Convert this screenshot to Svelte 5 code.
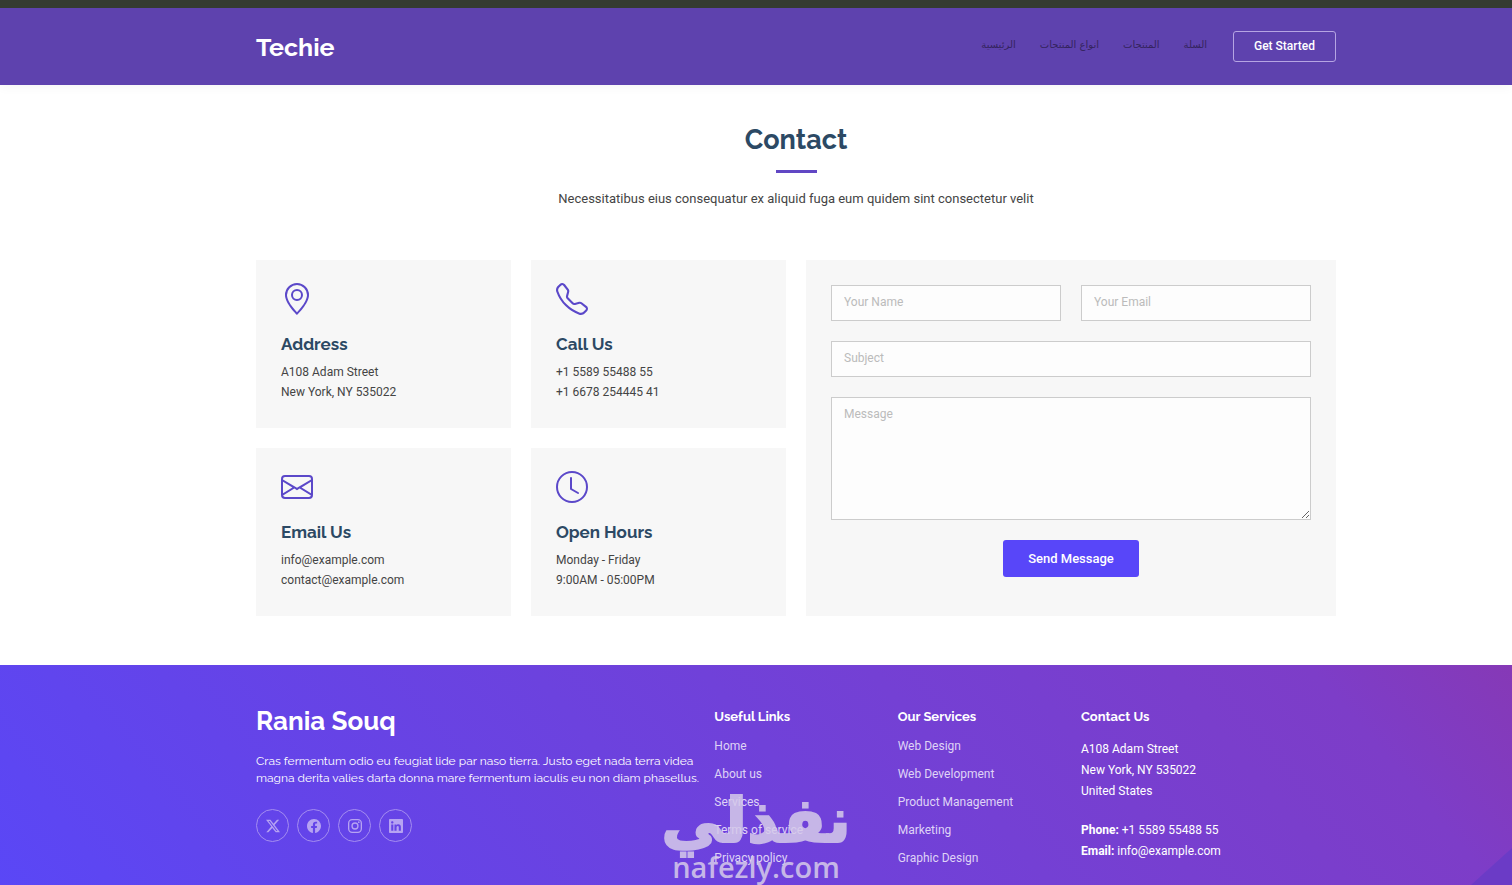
<script>
	const nav = ['الرئيسية', 'انواع المنتجات', 'المنتجات', 'السلة'];

	const cards = [
		{ icon: 'geo', title: 'Address', lines: ['A108 Adam Street', 'New York, NY 535022'] },
		{ icon: 'phone', title: 'Call Us', lines: ['+1 5589 55488 55', '+1 6678 254445 41'] },
		{ icon: 'envelope', title: 'Email Us', lines: ['info@example.com', 'contact@example.com'] },
		{ icon: 'clock', title: 'Open Hours', lines: ['Monday - Friday', '9:00AM - 05:00PM'] }
	];

	const columns = [
		{
			title: 'Useful Links',
			links: ['Home', 'About us', 'Services', 'Terms of service', 'Privacy policy']
		},
		{
			title: 'Our Services',
			links: ['Web Design', 'Web Development', 'Product Management', 'Marketing', 'Graphic Design']
		}
	];

	const socials = [
		{ icon: 'x', label: 'X' },
		{ icon: 'facebook', label: 'Facebook' },
		{ icon: 'instagram', label: 'Instagram' },
		{ icon: 'linkedin', label: 'LinkedIn' }
	];

	const icons = {
		geo: 'M12.166 8.94c-.524 1.062-1.234 2.12-1.96 3.07A32 32 0 0 1 8 14.58a32 32 0 0 1-2.206-2.57c-.726-.95-1.436-2.008-1.96-3.07C3.304 7.867 3 6.862 3 6a5 5 0 0 1 10 0c0 .862-.305 1.867-.834 2.94M8 16s6-5.686 6-10A6 6 0 0 0 2 6c0 4.314 6 10 6 10M8 8a2 2 0 1 1 0-4 2 2 0 0 1 0 4m0 1a3 3 0 1 0 0-6 3 3 0 0 0 0 6',
		phone: 'M3.654 1.328a.678.678 0 0 0-1.015-.063L1.605 2.3c-.483.484-.661 1.169-.45 1.77a17.6 17.6 0 0 0 4.168 6.608 17.6 17.6 0 0 0 6.608 4.168c.601.211 1.286.033 1.77-.45l1.034-1.034a.678.678 0 0 0-.063-1.015l-2.307-1.794a.68.68 0 0 0-.58-.122l-2.19.547a1.75 1.75 0 0 1-1.657-.459L5.482 8.062a1.75 1.75 0 0 1-.46-1.657l.548-2.19a.68.68 0 0 0-.122-.58zM1.884.511a1.745 1.745 0 0 1 2.612.163L6.29 2.98c.329.423.445.974.315 1.494l-.547 2.19a.68.68 0 0 0 .178.643l2.457 2.457a.68.68 0 0 0 .644.178l2.189-.547a1.75 1.75 0 0 1 1.494.315l2.306 1.794c.829.645.905 1.87.163 2.611l-1.034 1.034c-.74.74-1.846 1.065-2.877.702a18.6 18.6 0 0 1-7.01-4.42 18.6 18.6 0 0 1-4.42-7.009c-.362-1.03-.037-2.137.703-2.877z',
		envelope: 'M0 4a2 2 0 0 1 2-2h12a2 2 0 0 1 2 2v8a2 2 0 0 1-2 2H2a2 2 0 0 1-2-2zm2-1a1 1 0 0 0-1 1v.217l7 4.2 7-4.2V4a1 1 0 0 0-1-1zm13 2.383-4.708 2.825L15 11.105zm-.034 6.876-5.64-3.471L8 9.583l-1.326-.795-5.64 3.47A1 1 0 0 0 2 13h12a1 1 0 0 0 .966-.741M1 11.105l4.708-2.897L1 5.383z',
		clock: 'M8 3.5a.5.5 0 0 0-1 0V9a.5.5 0 0 0 .252.434l3.5 2a.5.5 0 0 0 .496-.868L8 8.71zM8 16A8 8 0 1 0 8 0a8 8 0 0 0 0 16m7-8A7 7 0 1 1 1 8a7 7 0 0 1 14 0',
		x: 'M12.6.75h2.454l-5.36 6.142L16 15.25h-4.937l-3.867-5.07-4.425 5.07H.316l5.733-6.57L0 .75h5.063l3.495 4.633L12.601.75Zm-.86 13.028h1.36L4.323 2.145H2.865z',
		facebook: 'M16 8.049c0-4.446-3.582-8.05-8-8.05C3.58 0-.002 3.603-.002 8.05c0 4.017 2.926 7.347 6.75 7.951v-5.625h-2.03V8.05H6.75V6.275c0-2.017 1.195-3.131 3.022-3.131.876 0 1.791.157 1.791.157v1.98h-1.009c-.993 0-1.303.621-1.303 1.258v1.51h2.218l-.354 2.326H9.25V16c3.824-.604 6.75-3.934 6.75-7.951',
		linkedin: 'M0 1.146C0 .513.526 0 1.175 0h13.65C15.474 0 16 .513 16 1.146v13.708c0 .633-.526 1.146-1.175 1.146H1.175C.526 16 0 15.487 0 14.854zm4.943 12.248V6.169H2.542v7.225zm-1.2-8.212c.837 0 1.358-.554 1.358-1.248-.015-.709-.52-1.248-1.342-1.248S2.4 3.226 2.4 3.934c0 .694.521 1.248 1.327 1.248zm4.908 8.212V9.359c0-.216.016-.432.08-.586.173-.431.568-.878 1.232-.878.869 0 1.216.662 1.216 1.634v3.865h2.401V9.25c0-2.22-1.184-3.252-2.764-3.252-1.274 0-1.845.7-2.165 1.193v-1.022h-2.4c.03.678 0 7.225 0 7.225z'
	};

	let form = $state({ name: '', email: '', subject: '', message: '' });

	function send(event) {
		event.preventDefault();
		form = { name: '', email: '', subject: '', message: '' };
	}
</script>

{#snippet icon(name)}
	<svg viewBox="0 0 16 16" aria-hidden="true">
		{#if name === 'instagram'}
			<rect class="line" x="0.75" y="0.75" width="14.5" height="14.5" rx="4" />
			<circle class="line" cx="8" cy="8" r="3.4" />
			<circle cx="12.3" cy="3.7" r="1" />
		{:else}
			<path fill-rule="evenodd" d={icons[name]} />
		{/if}
	</svg>
{/snippet}

<div class="page">
	<header>
		<div class="container bar">
			<a class="logo" href="#home">Techie</a>
			<nav>
				{#each nav as item}
					<a href="#home" lang="ar">{item}</a>
				{/each}
			</nav>
			<a class="get-started" href="#start">Get Started</a>
		</div>
	</header>

	<main>
		<div class="container">
			<div class="section-title">
				<h2>Contact</h2>
				<p>Necessitatibus eius consequatur ex aliquid fuga eum quidem sint consectetur velit</p>
			</div>

			<div class="contact">
				<div class="cards">
					{#each cards as card}
						<div class="card">
							{@render icon(card.icon)}
							<h3>{card.title}</h3>
							{#each card.lines as line}
								<p>{line}</p>
							{/each}
						</div>
					{/each}
				</div>

				<form onsubmit={send}>
					<input type="text" aria-label="Your Name" placeholder="Your Name" bind:value={form.name} />
					<input type="email" aria-label="Your Email" placeholder="Your Email" bind:value={form.email} />
					<input class="wide" type="text" aria-label="Subject" placeholder="Subject" bind:value={form.subject} />
					<textarea class="wide" aria-label="Message" placeholder="Message" bind:value={form.message}></textarea>
					<button class="wide" type="submit">Send Message</button>
				</form>
			</div>
		</div>
	</main>

	<footer>
		<div class="container">
			<div class="footer-row">
				<div class="about">
					<a class="site-name" href="#home">Rania Souq</a>
					<p>
						Cras fermentum odio eu feugiat lide par naso tierra. Justo eget nada terra videa magna
						derita valies darta donna mare fermentum iaculis eu non diam phasellus.
					</p>
					<div class="socials">
						{#each socials as social}
							<a href="#social" aria-label={social.label}>{@render icon(social.icon)}</a>
						{/each}
					</div>
				</div>
				{#each columns as column}
					<div>
						<h4>{column.title}</h4>
						<ul>
							{#each column.links as link}
								<li><a href="#link">{link}</a></li>
							{/each}
						</ul>
					</div>
				{/each}
				<div class="address">
					<h4>Contact Us</h4>
					<p>A108 Adam Street</p>
					<p>New York, NY 535022</p>
					<p>United States</p>
					<p class="phone"><strong>Phone:</strong> +1 5589 55488 55</p>
					<p><strong>Email:</strong> info@example.com</p>
				</div>
			</div>
		</div>
		<div class="stamp">
			<span class="stamp-ar" lang="ar">نفذلي</span>
			<span class="stamp-en">nafezly.com</span>
		</div>
	</footer>
</div>

<style>
	:global(body) {
		background: #fff;
		color: #444;
		font-family: Roboto, 'Liberation Sans', sans-serif;
		font-size: 12px;
	}
	.page {
		--heading: Raleway, Lato, sans-serif;
		display: flex;
		flex-direction: column;
		min-height: 100vh;
	}
	.page * {
		box-sizing: border-box;
	}
	a {
		color: inherit;
		text-decoration: none;
	}
	h2,
	h3,
	h4,
	p,
	ul {
		margin: 0;
		padding: 0;
	}
	h2,
	h3,
	h4 {
		font-family: var(--heading);
		font-weight: 700;
	}
	svg {
		display: block;
		fill: currentColor;
	}
	.line {
		fill: none;
		stroke: currentColor;
		stroke-width: 1.5;
	}
	header,
	main,
	footer {
		padding-left: 80px;
	}
	.container {
		max-width: 1080px;
		margin: 0 auto;
	}

	header {
		border-top: 8px solid #353b31;
		background: #5e42ae;
		box-shadow: 0 0 12px rgba(0, 0, 0, 0.06);
	}
	.bar {
		display: flex;
		align-items: center;
		height: 77px;
	}
	.logo {
		margin-right: auto;
		color: #fff;
		font-family: var(--heading);
		font-size: 25px;
		font-weight: 700;
	}
	nav {
		display: flex;
		gap: 24px;
		margin-right: 26px;
		padding-bottom: 4px;
		color: #35245f;
		font-family: 'DejaVu Sans', sans-serif;
		font-size: 10px;
	}
	.get-started {
		padding: 0 20px;
		border: 1px solid #b6a5e3;
		border-radius: 3px;
		color: #fff;
		font-weight: 500;
		line-height: 29px;
	}

	main {
		padding-bottom: 49px;
	}
	.section-title {
		padding: 39px 0 50px;
		text-align: center;
	}
	h2 {
		color: #2c4964;
		font-size: 27px;
		line-height: 32px;
	}
	h2::after {
		content: '';
		display: block;
		width: 41px;
		height: 3px;
		margin: 14px auto 15px;
		background: #6147c4;
	}
	.section-title p {
		font-size: 13px;
		line-height: 22px;
	}
	.contact {
		display: grid;
		grid-template-columns: 1fr 1fr;
		gap: 20px;
	}
	.cards {
		display: grid;
		grid-template-columns: 1fr 1fr;
		gap: 20px;
	}
	.card {
		padding: 23px 25px 26px;
		background: #f7f7f7;
		line-height: 20px;
	}
	.card svg {
		width: 32px;
		height: 32px;
		margin-bottom: 18px;
		color: #5b48c9;
	}
	h3 {
		margin-bottom: 7px;
		color: #2c4964;
		font-size: 17px;
		line-height: 22px;
	}
	form {
		display: grid;
		grid-template-columns: 1fr 1fr;
		align-content: start;
		gap: 20px;
		padding: 25px;
		background: #f7f7f7;
	}
	input,
	textarea {
		width: 100%;
		min-width: 0;
		margin: 0;
		padding: 0 12px 2px;
		border: 1px solid #ccc;
		border-radius: 0;
		background: #fdfdfd;
		color: #444;
		font: 12px Roboto, sans-serif;
	}
	input {
		height: 36px;
	}
	textarea {
		display: block;
		height: 123px;
		padding-top: 9px;
	}
	input::placeholder,
	textarea::placeholder {
		color: #bbb;
	}
	.wide {
		grid-column: 1 / -1;
	}
	button {
		justify-self: center;
		padding: 0 25px;
		border: 0;
		border-radius: 3px;
		background: #5846f9;
		color: #fff;
		font: 500 13px/37px Roboto, sans-serif;
	}

	footer {
		position: relative;
		flex: 1;
		overflow: hidden;
		background:
			linear-gradient(318deg, #6b3bc6 27px, transparent 28px),
			linear-gradient(50deg, #5a47f6 0%, #6344ea 20%, #6c42de 42%, #7440d4 62%, #7d3dc8 88%, #8639b6 100%);
		color: #fff;
	}
	.footer-row {
		display: grid;
		grid-template-columns: 5fr 2fr 2fr 3fr;
		margin-right: -20px;
		padding: 40px 0 12px;
	}
	.footer-row > div {
		padding-right: 8px;
	}
	.site-name {
		font-family: var(--heading);
		font-size: 26px;
		font-weight: 700;
		line-height: 32px;
	}
	.about p {
		margin: 16px 0 22px;
		font-family: var(--heading);
		font-size: 12px;
		line-height: 17px;
	}
	.socials {
		display: flex;
		gap: 8px;
	}
	.socials a {
		display: grid;
		place-items: center;
		width: 33px;
		height: 33px;
		border: 1px solid #a48df0;
		border-radius: 50%;
		color: #b6a3f2;
	}
	.socials svg {
		width: 14px;
		height: 14px;
	}
	h4 {
		padding-top: 2px;
		font-size: 13px;
		line-height: 20px;
	}
	ul {
		margin-top: 5px;
		list-style: none;
		color: #dfd3f6;
		line-height: 28px;
	}
	.address p {
		line-height: 21px;
	}
	.address h4 {
		margin-bottom: 12px;
	}
	.address .phone {
		margin-top: 18px;
	}
	.stamp {
		position: absolute;
		bottom: 2px;
		left: 50%;
		display: flex;
		flex-direction: column;
		align-items: center;
		transform: translateX(-50%);
		color: #d6cbea;
		opacity: 0.85;
		pointer-events: none;
	}
	.stamp-ar {
		font: 700 62px/60px 'DejaVu Sans', sans-serif;
		-webkit-text-stroke: 2px #d6cbea;
	}
	.stamp-en {
		font: 600 29px/32px 'Open Sans', sans-serif;
	}
</style>
